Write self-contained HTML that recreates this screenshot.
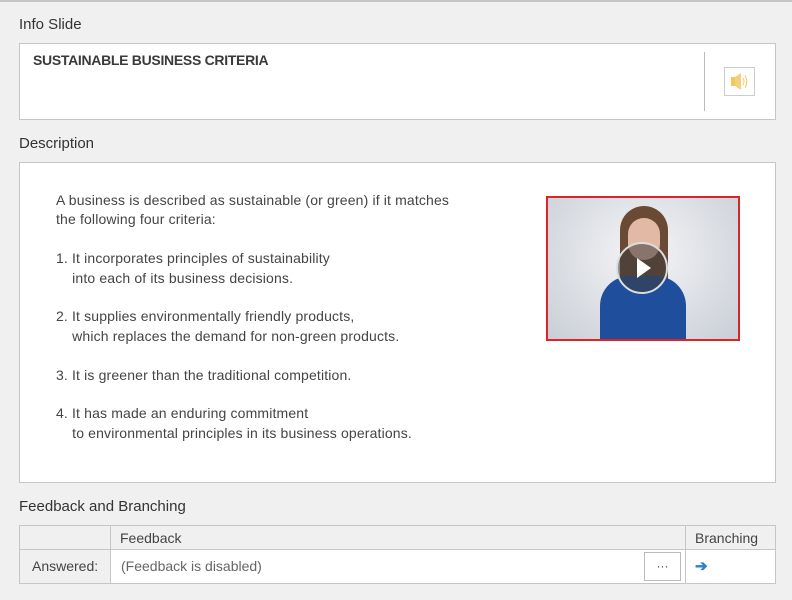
<!DOCTYPE html>
<html><head><style>
body{margin:0;width:792px;height:600px;background:#f0f0f0;font-family:"Liberation Sans",sans-serif;color:#333;position:relative;overflow:hidden}
.a{position:absolute}
.lbl{font-size:15px;color:#333}
.box{background:#fff;border:1px solid #c9c5c2}
.t{font-size:14px;color:#444;line-height:19.4px;white-space:pre;letter-spacing:0.15px}
</style></head><body>
<div class="a" style="left:0;top:0;width:792px;height:2px;background:#c9c5c2"></div>
<div class="a lbl" style="left:19px;top:16px">Info Slide</div>
<div class="a box" style="left:19px;top:43px;width:755px;height:75px"></div>
<div class="a" style="left:33px;top:52px;font-size:14px;font-weight:bold;color:#3a3a3a;letter-spacing:-0.3px">SUSTAINABLE BUSINESS CRITERIA</div>
<div class="a" style="left:704px;top:52px;width:1px;height:59px;background:#bbb"></div>
<div class="a" style="left:724px;top:67px;width:29px;height:27px;border:1px solid #ccc;background:#fff">
<svg width="29" height="27" viewBox="0 0 29 27"><rect x="6" y="9" width="4" height="9" fill="#f3c85a"/><path d="M10 9 L16 5 V22 L10 18Z" fill="#f3d07a"/><path d="M18 10 Q20 13.5 18 17 M20 7.5 Q23.5 13.5 20 19.5" stroke="#f3c85a" fill="none"/></svg></div>
<div class="a lbl" style="left:19px;top:135px">Description</div>
<div class="a box" style="left:19px;top:162px;width:755px;height:319px"></div>
<div class="a t" style="left:56px;top:191px">A business is described as sustainable (or green) if it matches
the following four criteria:

1. It incorporates principles of sustainability
    into each of its business decisions.

2. It supplies environmentally friendly products,
    which replaces the demand for non-green products.

3. It is greener than the traditional competition.

4. It has made an enduring commitment
    to environmental principles in its business operations.</div>
<div class="a" style="left:546px;top:196px;width:190px;height:141px;border:2px solid #d9252a;background:radial-gradient(ellipse at 50% 40%,#f4f5f7,#c9ced6);overflow:hidden">
<div class="a" style="left:72px;top:8px;width:48px;height:90px;border-radius:24px 24px 10px 10px;background:#6b4a35"></div>
<div class="a" style="left:80px;top:20px;width:32px;height:42px;border-radius:16px;background:#e2b9a4"></div>
<div class="a" style="left:52px;top:78px;width:86px;height:70px;border-radius:30px 30px 0 0;background:#1f4f9c"></div>
<div class="a" style="left:68px;top:44px;width:52px;height:52px;border-radius:50%;border:2px solid #ddd;background:rgba(60,60,60,.55);box-sizing:border-box"></div>
<svg class="a" style="left:68px;top:44px" width="52" height="52"><path d="M21 16 L35 26 L21 36Z" fill="#fff"/></svg>
</div>
<div class="a lbl" style="left:19px;top:498px">Feedback and Branching</div>
<div class="a" style="left:19px;top:525px;width:755px;height:57px;border:1px solid #c9c5c2;background:#f0f0f0"></div>
<div class="a" style="left:110px;top:549px;width:575px;height:34px;background:#fff"></div>
<div class="a" style="left:685px;top:549px;width:90px;height:34px;background:#fff"></div>
<div class="a" style="left:20px;top:549px;width:755px;height:1px;background:#c9c5c2"></div>
<div class="a" style="left:110px;top:526px;width:1px;height:57px;background:#c9c5c2"></div>
<div class="a" style="left:685px;top:526px;width:1px;height:57px;background:#c9c5c2"></div>
<div class="a" style="left:120px;top:530px;font-size:14px;color:#444">Feedback</div>
<div class="a" style="left:695px;top:530px;font-size:14px;color:#444">Branching</div>
<div class="a" style="left:32px;top:558px;font-size:14px;color:#444">Answered:</div>
<div class="a" style="left:121px;top:558px;font-size:14px;color:#666">(Feedback is disabled)</div>
<div class="a" style="left:644px;top:552px;width:35px;height:27px;border:1px solid #bbb;background:#fff;text-align:center;font-size:12px;line-height:27px;color:#444">···</div>
<div class="a" style="left:695px;top:557px;font-size:15px;color:#2c7fd0;font-weight:bold">➔</div>
</body></html>
